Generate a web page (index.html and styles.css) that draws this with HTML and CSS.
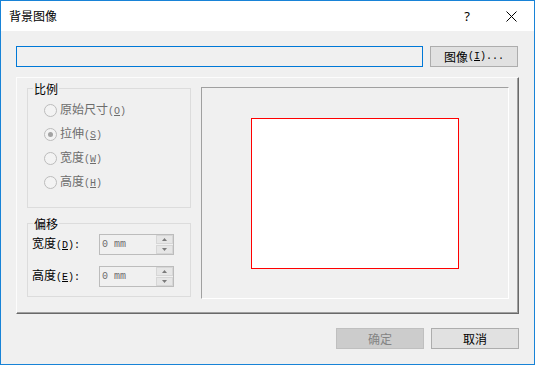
FILE: index.html
```html
<!DOCTYPE html>
<html>
<head>
<meta charset="utf-8">
<link rel="stylesheet" href="styles.css">
</head>
<body>
<div class="win">
  <div class="titlebar">
    <span class="title">背景图像</span>
    <span class="help">?</span>
    <svg class="close" width="11" height="11" viewBox="0 0 11 11"><path d="M0.5 0.5L10.5 10.5M10.5 0.5L0.5 10.5" stroke="#000" stroke-width="1" fill="none"/></svg>
  </div>
  <div class="body">
    <div class="row1">
      <div class="path"></div>
      <div class="btn">图像<span class="l">(<u>I</u>)...</span></div>
    </div>
    <div class="panel">
      <div class="leftcol">
        <div class="group g1">
          <span class="legend">比例</span>
          <div class="radio"><span class="rb"></span><span class="dis">原始尺寸<span class="l">(<u>O</u>)</span></span></div>
          <div class="radio"><span class="rb checked"></span><span class="dis">拉伸<span class="l">(<u>S</u>)</span></span></div>
          <div class="radio"><span class="rb"></span><span class="dis">宽度<span class="l">(<u>W</u>)</span></span></div>
          <div class="radio"><span class="rb"></span><span class="dis">高度<span class="l">(<u>H</u>)</span></span></div>
        </div>
        <div class="group g2">
          <span class="legend">偏移</span>
          <div class="field">
            <span class="flabel">宽度<span class="l">(<u>D</u>):</span></span>
            <div class="spin">
              <span class="val">0 mm</span>
              <div class="spinbtns">
                <div class="sb"><svg width="5" height="3" viewBox="0 0 5 3"><path d="M2.5 0L5 3H0Z" fill="#7a7a7a"/></svg></div>
                <div class="sb"><svg width="5" height="3" viewBox="0 0 5 3"><path d="M0 0H5L2.5 3Z" fill="#7a7a7a"/></svg></div>
              </div>
            </div>
          </div>
          <div class="field">
            <span class="flabel">高度<span class="l">(<u>E</u>):</span></span>
            <div class="spin">
              <span class="val">0 mm</span>
              <div class="spinbtns">
                <div class="sb"><svg width="5" height="3" viewBox="0 0 5 3"><path d="M2.5 0L5 3H0Z" fill="#7a7a7a"/></svg></div>
                <div class="sb"><svg width="5" height="3" viewBox="0 0 5 3"><path d="M0 0H5L2.5 3Z" fill="#7a7a7a"/></svg></div>
              </div>
            </div>
          </div>
        </div>
      </div>
      <div class="preview"><div class="page"></div></div>
    </div>
    <div class="buttons">
      <div class="btn disabled">确定</div>
      <div class="btn">取消</div>
    </div>
  </div>
</div>
</body>
</html>
```
FILE: styles.css
```css
* { box-sizing: border-box; }
html, body { margin: 0; padding: 0; }
body {
  font-family: "Noto Sans CJK SC", "Noto Sans", sans-serif;
  font-size: 12px;
  color: #000;
  background: #fff;
}
.win {
  width: 535px;
  height: 365px;
  border: 1px solid #1883d7;
  display: flex;
  flex-direction: column;
  background: #f0f0f0;
}
.titlebar {
  height: 30px;
  flex: none;
  background: #fff;
  display: flex;
  align-items: center;
  padding-left: 8px;
}
.title { line-height: 16px; }
.help {
  margin-left: auto;
  margin-right: 36px;
  font-family: "Noto Sans", sans-serif;
  font-size: 13px;
  line-height: 16px;
}
.close { margin-right: 17px; }
.body {
  flex: 1;
  display: flex;
  flex-direction: column;
  padding: 15px 15px 0 15px;
}
.row1 {
  display: flex;
  gap: 7px;
  height: 21px;
}
.path {
  width: 407px;
  height: 21px;
  border: 1px solid #0078d7;
  background: #f0f0f0;
}
.btn {
  width: 88px;
  height: 21px;
  border: 1px solid #adadad;
  background: #e1e1e1;
  display: flex;
  align-items: center;
  justify-content: center;
  line-height: 16px;
}
.btn.disabled {
  background: #cccccc;
  border-color: #bfbfbf;
  color: #838383;
}
.l {
  font-family: "Liberation Mono", monospace;
  font-size: 10px;
}
.panel {
  margin-top: 10px;
  width: 503px;
  height: 237px;
  flex: none;
  border: 1px solid;
  border-color: #fcfcfc #696969 #696969 #fcfcfc;
  box-shadow: inset -1px -1px #a0a0a0;
  display: flex;
  align-items: flex-start;
  gap: 10px;
  padding: 10px 0 0 10px;
}
.leftcol {
  width: 164px;
  display: flex;
  flex-direction: column;
  gap: 15px;
}
.group {
  position: relative;
  border: 1px solid #dcdcdc;
}
.legend {
  position: absolute;
  top: -8px;
  left: 5px;
  padding: 0 1px;
  line-height: 16px;
  background: #f0f0f0;
}
.g1 {
  height: 120px;
  padding: 9px 0 0 16px;
}
.radio {
  height: 24px;
  display: flex;
  align-items: center;
}
.rb {
  width: 13px;
  height: 13px;
  border: 1px solid #bcbcbc;
  border-radius: 50%;
  background: #f3f3f3;
  margin-right: 3px;
  display: flex;
  align-items: center;
  justify-content: center;
}
.rb.checked::after {
  content: "";
  width: 5px;
  height: 5px;
  border-radius: 50%;
  background: #a3a3a3;
}
.dis { color: #6d6d6d; line-height: 16px; }
.g2 {
  height: 74px;
  padding: 10px 0 0 4px;
  display: flex;
  flex-direction: column;
  gap: 11px;
}
.field {
  display: flex;
  align-items: center;
  height: 21px;
}
.flabel {
  width: 67px;
  line-height: 16px;
}
.spin {
  width: 75px;
  height: 21px;
  border: 1px solid #bcbcbc;
  background: #f0f0f0;
  display: flex;
  align-items: center;
  padding-left: 2px;
}
.val {
  flex: 1;
  font-family: "Liberation Mono", monospace;
  font-size: 10px;
  color: #6d6d6d;
}
.spinbtns {
  width: 17px;
  height: 19px;
  display: flex;
  flex-direction: column;
  gap: 1px;
}
.sb {
  flex: 1;
  background: #e6e6e6;
  border: 1px solid #d6d6d6;
  display: flex;
  align-items: center;
  justify-content: center;
}
.preview {
  width: 308px;
  height: 212px;
  margin-top: -1px;
  border: 1px solid;
  border-color: #a0a0a0 #fff #fff #a0a0a0;
  display: flex;
  align-items: center;
  justify-content: center;
}
.page {
  width: 208px;
  height: 151px;
  border: 1px solid #f00;
  background: #fff;
}
.buttons {
  margin-top: 14px;
  display: flex;
  justify-content: flex-end;
  gap: 7px;
}
```
